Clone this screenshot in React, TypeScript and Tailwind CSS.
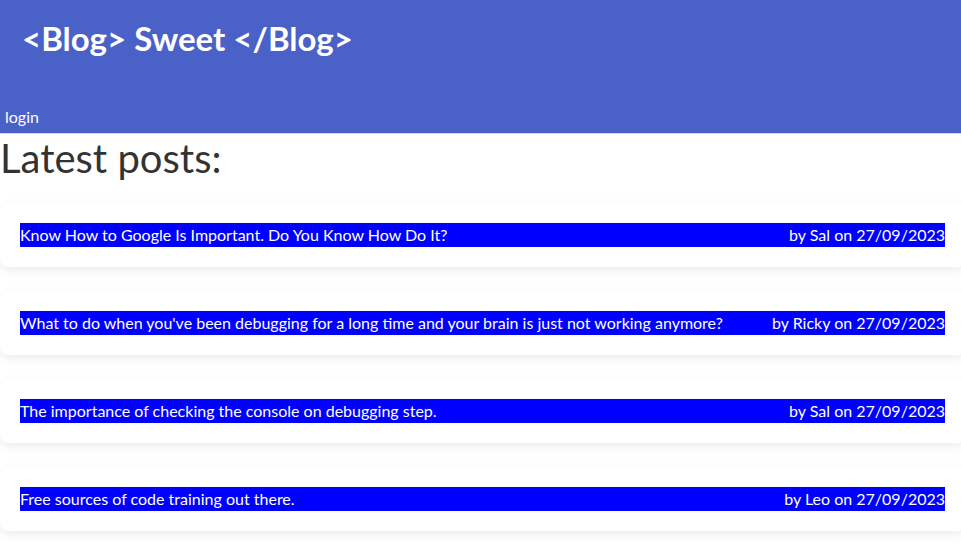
import React from "react";

const posts = [
  { title: "Know How to Google Is Important. Do You Know How Do It?", author: "Sal", date: "27/09/2023" },
  { title: "What to do when you've been debugging for a long time and your brain is just not working anymore?", author: "Ricky", date: "27/09/2023" },
  { title: "The importance of checking the console on debugging step.", author: "Sal", date: "27/09/2023" },
  { title: "Free sources of code training out there.", author: "Leo", date: "27/09/2023" },
];

export default function App() {
  return (
    <div className="min-h-[549px] w-full overflow-hidden bg-white font-['Lato',sans-serif]">
      <header className="flex h-[134px] flex-col border-b border-[#cfd4ec] bg-[#4a61c8] text-white">
        <h1 className="pl-[22px] pt-[19px] text-[33px] font-bold leading-[38px]">&lt;Blog&gt; Sweet &lt;/Blog&gt;</h1>
        <nav className="mt-auto pb-[7px] pl-[5px] text-[16px] leading-[19px]">
          <a>login</a>
        </nav>
      </header>
      <h2 className="text-[40px] leading-[48px] text-[#333333]">Latest posts:</h2>
      <main className="mt-[21px] flex w-[965px] flex-col gap-6">
        {posts.map((p, i) => (
          <div key={i} className="rounded-lg bg-white px-5 py-5 shadow-[0_3px_10px_rgba(0,0,0,0.08)]">
            <div className="flex justify-between bg-[#0000ff] text-[16px] leading-6 text-white">
              <span>{p.title}</span>
              <span>by {p.author} on {p.date}</span>
            </div>
          </div>
        ))}
      </main>
    </div>
  );
}
